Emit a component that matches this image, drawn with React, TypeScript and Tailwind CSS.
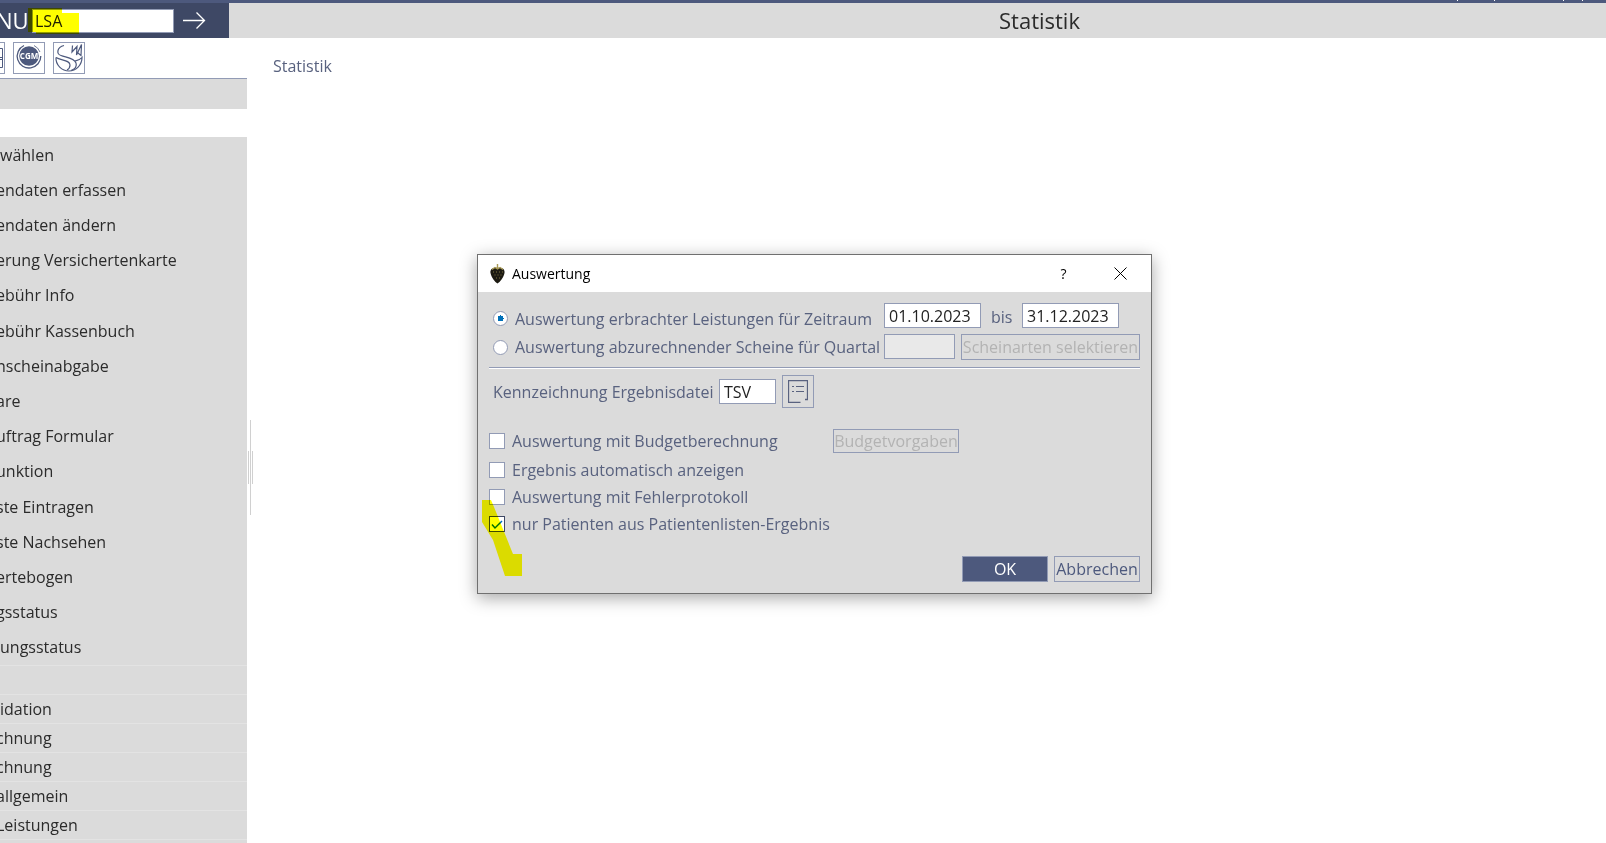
import React from 'react';

const App: React.FC = () => {
  const menuItems = [
    'wählen',
    'endaten erfassen',
    'endaten ändern',
    'erung Versichertenkarte',
    'ebühr Info',
    'ebühr Kassenbuch',
    'nscheinabgabe',
    'are',
    'uftrag Formular',
    'unktion',
    'ste Eintragen',
    'ste Nachsehen',
    'ertebogen',
    'gsstatus',
    'ungsstatus',
  ];

  const billingItems = ['', 'idation', 'chnung', 'chnung', 'allgemein', 'Leistungen', ''];

  // entries that start flush with the window edge, all others run past it
  const flushItems = ['wählen', 'ungsstatus', 'idation'];
  const itemClass = (item: string) => (flushItems.includes(item) ? 'ml-0' : '-ml-1');

  const boxButton = 'border border-[#929bb5] text-base leading-none whitespace-nowrap';
  const textField = 'h-[25px] border border-[#929bb5] bg-white px-1 text-base text-[#222]';
  const radio = 'size-[15px] shrink-0 appearance-none rounded-full border border-[#929bb5] bg-white';
  const checkbox =
    'size-4 shrink-0 appearance-none border border-[#929bb5] bg-white checked:border-[#3e4865]';

  return (
    <div className="flex h-screen flex-col overflow-hidden bg-white font-['Open_Sans','Noto_Sans',sans-serif] text-base text-[#2b2b2b]">
      <div className="flex h-[3px] shrink-0 items-start justify-end bg-[#4d597d] pr-[23px]">
        <span className="mr-9 h-px w-px bg-white" />
        <span className="mr-[68px] h-px w-px bg-white" />
        <span className="mr-[18px] h-px w-px bg-white" />
        <span className="h-px w-px bg-white" />
      </div>

      <header className="flex h-[35px] shrink-0 bg-[#dbdbdb]">
        <div className="relative flex w-[229px] items-center bg-[#3e4865]">
          <label htmlFor="menu" className="-ml-1 w-9 text-[22px] text-white">
            NU
          </label>
          <input
            id="menu"
            defaultValue="LSA"
            className="h-6 w-[142px] border border-[#929bb5] bg-white px-0.5 text-base text-[#222]"
          />
          <button aria-label="Los" className="ml-2 text-white">
            <svg width="24" height="18" viewBox="0 0 24 18" fill="none" stroke="currentColor" strokeWidth="1.3">
              <path d="M1 8.500H22.500M14.500 0.500L22.500 8.500L14.500 16.500" />
            </svg>
          </button>
          <svg className="pointer-events-none absolute top-[5px] left-7 mix-blend-multiply" width="52" height="27">
            <path d="M0 0H34V5H51V26H8V24H0Z" fill="#ffff00" />
          </svg>
        </div>
        <h1 className="ml-[770px] text-[22px] leading-[34px]">Statistik</h1>
      </header>

      <div className="flex min-h-0 flex-1">
        <aside className="flex w-[247px] shrink-0 flex-col overflow-hidden">
          <div className="-ml-[27px] flex h-10 shrink-0 gap-2 pt-1">
            <button aria-label="Liste" className="size-8 shrink-0 border border-[#929bb5]">
              <svg width="30" height="30" fill="none" stroke="#4d597d">
                <path d="M6 5.500H28.500V24.500H6M6 14.500H28.500M6 16.500H28.500" />
              </svg>
            </button>
            <button aria-label="CGM" className="size-8 shrink-0 border border-[#929bb5]">
              <svg width="30" height="30" viewBox="0 0 30 30" fill="none">
                <circle cx="15" cy="13" r="9.800" fill="#4d597d" />
                <path d="M10 2.500A11.800 11.800 0 1 0 26.800 13" stroke="#4d597d" strokeWidth="1.3" />
                <path d="M20 2.500A11.800 11.800 0 0 1 26 9" stroke="#4d597d" strokeWidth="0.800" />
                <text x="15" y="16" textAnchor="middle" fontSize="8" fontWeight="700" fill="#fff">
                  CGM
                </text>
              </svg>
            </button>
            <button aria-label="Labor" className="size-8 shrink-0 border border-[#929bb5]">
              <svg width="30" height="30" viewBox="0 0 30 30" fill="none" stroke="#4d597d" strokeWidth="1.2">
                <path d="M10 2.500C3 4 2 11 7 12.500C12 14.500 20 15 22 20C23 23 21 26 17 27.500" />
                <path d="M2 14.500C7 17.500 16 17 16 22C16 24 15 26 13 27" />
                <path d="M2 14.500C1.500 22 8 28 15 28C22 28 28 22 28 14.500C26 17 23 17.500 21 18" />
                <path d="M18.500 2.500L18 9L23 3.500L22.500 12L27.500 1.500L27 12.500L24 10" />
              </svg>
            </button>
          </div>
          <div className="h-[31px] shrink-0 border-t border-[#929bb5] bg-[#dbdbdb]" />

          <nav className="mt-7 flex flex-1 flex-col bg-[#dbdbdb] whitespace-nowrap">
            <ul className="flex h-[528px] shrink-0 flex-col">
              {menuItems.map((item) => (
                <li key={item} className="flex flex-1 items-center">
                  <a href="#" className={itemClass(item)}>
                    {item}
                  </a>
                </li>
              ))}
            </ul>
            <ul>
              {billingItems.map((item, index) => (
                <li key={index} className="flex h-[29px] items-center border-t border-[#e3e3e3]">
                  {item && (
                    <a href="#" className={itemClass(item)}>
                      {item}
                    </a>
                  )}
                </li>
              ))}
            </ul>
          </nav>
        </aside>

        {/* splitter grip */}
        <div className="mt-[54px] ml-px flex shrink-0 items-center gap-px self-center">
          <span className="h-[33px] w-px bg-[#d0d0d0]" />
          <span className="h-[95px] w-px bg-[#d0d0d0]" />
          <span className="h-[33px] w-px bg-[#d0d0d0]" />
        </div>

        <main className="px-5 pt-4 text-[#59627f]">
          <h2>Statistik</h2>
        </main>
      </div>

      <div
        role="dialog"
        aria-labelledby="dialog-title"
        className="absolute top-[254px] left-[477px] w-[675px] border border-[#707070] bg-[#dbdbdb] text-[#59627f] shadow-[0_4px_16px_rgba(0,0,0,0.35)]"
      >
        <div className="flex h-[37px] items-center bg-white pr-0.5 pl-3 text-black">
          <svg width="15" height="20" viewBox="0 0 15 20">
            <path d="M7.500 4C13 3 15 6 14.500 9C13.500 14 10 18 7.500 19.500C5 18 1.500 14 0.500 9C0 6 2 3 7.500 4Z" fill="#1c1a12" />
            <path d="M7.500 0V4M2 5.500L5 3.500L7.500 5L10 3.500L13 5.500" stroke="#a99a55" strokeWidth="1.4" fill="none" />
            <path
              d="M3 8H4M6 8H7M9 8H10M12 8H13M4.500 11H5.500M7.500 11H8.500M10.500 11H11.500M6 14H7M9 14H10"
              stroke="#7d7240"
            />
          </svg>
          <h2 id="dialog-title" className="ml-[7px] text-sm">
            Auswertung
          </h2>
          <button aria-label="Hilfe" className="ml-auto w-[57px] text-sm">
            ?
          </button>
          <button aria-label="Schließen" className="flex w-[57px] justify-center">
            <svg width="13" height="13" viewBox="0 0 13 13" stroke="#000">
              <path d="M0.500 0.500L12.500 12.500M12.500 0.500L0.500 12.500" />
            </svg>
          </button>
        </div>

        <form className="px-[11px] py-[11px]" onSubmit={(e) => e.preventDefault()}>
          <div className="flex h-[25px]">
            <label className="flex w-[395px] items-center gap-[7px] pt-1.5 pl-1">
              <input
                type="radio"
                name="mode"
                defaultChecked
                className={`${radio} bg-[radial-gradient(circle,#0070b8_3px,transparent_3px)]`}
              />
              Auswertung erbrachter Leistungen für Zeitraum
            </label>
            <input aria-label="von" defaultValue="01.10.2023" className={`${textField} w-[97px]`} />
            <label htmlFor="until" className="w-[41px] pt-0.5 pl-2.5">
              bis
            </label>
            <input id="until" defaultValue="31.12.2023" className={`${textField} w-[97px]`} />
          </div>
          <div className="mt-1.5 flex h-[26px]">
            <label className="flex w-[395px] items-center gap-[7px] pl-1">
              <input type="radio" name="mode" className={radio} />
              Auswertung abzurechnender Scheine für Quartal
            </label>
            <input
              aria-label="Quartal"
              disabled
              className="h-[25px] w-[71px] border border-[#929bb5] bg-[#e9e9e9]"
            />
            <button type="button" disabled className={`${boxButton} ml-1.5 h-[26px] w-[179px] text-[#b3b3b3]`}>
              Scheinarten selektieren
            </button>
          </div>
          <hr className="mt-[7px] h-0.5 border-t border-b border-t-[#929bb5] border-b-white" />

          <div className="mt-1.5 flex h-[33px] items-center">
            <label htmlFor="tag" className="w-[230px] pl-1">
              Kennzeichnung Ergebnisdatei
            </label>
            <input id="tag" defaultValue="TSV" className={`${textField} w-[57px]`} />
            <button
              type="button"
              aria-label="Auswahl"
              className="ml-1.5 flex h-[33px] w-8 items-center justify-center border border-[#929bb5]"
            >
              <svg width="20" height="23" viewBox="0 0 20 23" fill="none" stroke="#59627f">
                <path d="M12.500 22.500H0.500V0.500H19.500V19.500H17" strokeWidth="1.3" />
                <path d="M4 6.500H6M8 6.500H16M4 11.500H6M8 11.500H16" />
              </svg>
            </button>
          </div>

          <div className="mt-[21px] flex h-6 items-center">
            <label className="flex w-[344px] items-center gap-[7px]">
              <input type="checkbox" className={checkbox} />
              Auswertung mit Budgetberechnung
            </label>
            <button type="button" disabled className={`${boxButton} h-6 w-[126px] text-[#b3b3b3]`}>
              Budgetvorgaben
            </button>
          </div>
          <div className="mt-[3px] flex flex-col items-start">
            <label className="flex h-[27px] items-center gap-[7px]">
              <input type="checkbox" className={checkbox} />
              Ergebnis automatisch anzeigen
            </label>
            <label className="flex h-[27px] items-center gap-[7px]">
              <input type="checkbox" className={checkbox} />
              Auswertung mit Fehlerprotokoll
            </label>
            <label className="relative flex h-[27px] items-center gap-[7px]">
              <input type="checkbox" defaultChecked className={checkbox} />
              <svg
                className="pointer-events-none absolute left-0 size-4"
                viewBox="0 0 16 16"
                fill="none"
                stroke="#0070b8"
                strokeWidth="1.5"
              >
                <path d="M3 8.500L6 12L13 5" />
              </svg>
              nur Patienten aus Patientenlisten-Ergebnis
            </label>
          </div>

          <div className="mt-[19px] flex justify-end gap-1.5">
            <button type="submit" className={`${boxButton} h-[26px] w-[86px] bg-[#4d597d] text-white`}>
              OK
            </button>
            <button type="button" className={`${boxButton} h-[26px] w-[86px] text-[#4d597d]`}>
              Abbrechen
            </button>
          </div>
        </form>

        {/* text marker stroke over the last tick box */}
        <svg className="pointer-events-none absolute bottom-[17px] left-1 mix-blend-multiply" width="40" height="76">
          <path d="M0 0H9L12 7L31 54H40V76H23L11 40L0 22Z" fill="#ffff00" />
        </svg>
      </div>
    </div>
  );
};

export default App;
